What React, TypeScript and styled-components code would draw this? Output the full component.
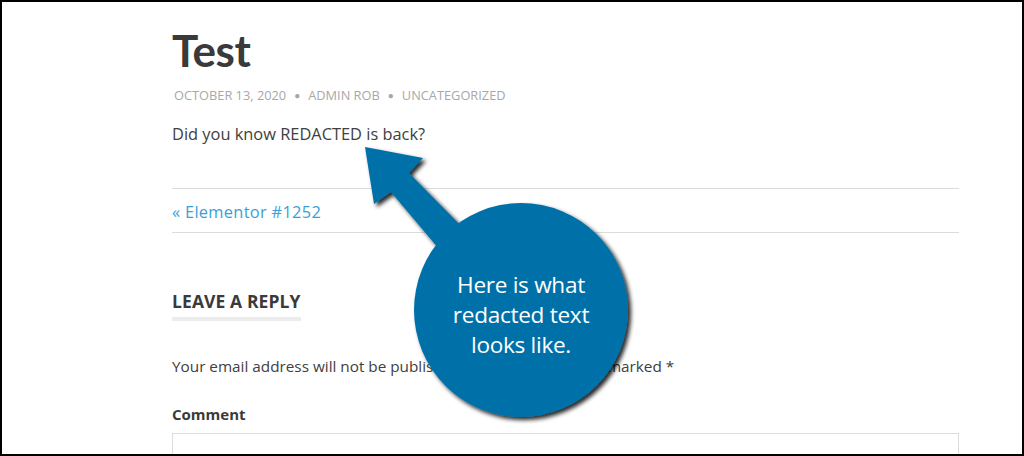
import React from "react";
import styled, { createGlobalStyle } from "styled-components";

const GlobalStyle = createGlobalStyle`
  html, body {
    margin: 0;
    padding: 0;
    background: #fff;
  }
  body {
    font-family: "Open Sans", "Liberation Sans", sans-serif;
    color: #404040;
  }
`;

const Frame = styled.div`
  position: relative;
  box-sizing: border-box;
  width: 1024px;
  height: 456px;
  border: 2px solid #000;
  overflow: hidden;
  background: #fff;
`;

const Article = styled.main`
  width: 787px;
  margin-left: 170px;
  display: flex;
  flex-direction: column;
`;

const Title = styled.h1`
  margin: 22px 0 0;
  font-family: "Lato", "Open Sans", sans-serif;
  font-size: 44px;
  font-weight: 700;
  line-height: 52px;
  color: #3a3a3a;
  letter-spacing: -0.5px;
`;

const Meta = styled.div`
  display: flex;
  align-items: center;
  gap: 8px;
  margin: 10px 0 0 2px;
  font-size: 12.8px;
  line-height: 18px;
  color: #a8a8a8;
  text-transform: uppercase;
`;

const Dot = styled.span`
  font-size: 10px;
`;

const Body = styled.p`
  margin: 18px 0 0;
  font-size: 16.4px;
  line-height: 24px;
`;

const Divider = styled.hr<{ $top: number }>`
  margin: ${({ $top }) => $top}px 0 0;
  border: 0;
  border-top: 1px solid #dcdcdc;
  height: 0;
`;

const NavLink = styled.a`
  margin: 11px 0 8px;
  font-size: 16.4px;
  line-height: 24px;
  color: #3a9fd8;
  text-decoration: none;
  letter-spacing: 0.3px;
`;

const ReplyTitle = styled.h3`
  align-self: flex-start;
  margin: 56px 0 0;
  padding-bottom: 4px;
  font-size: 17.5px;
  line-height: 24px;
  font-weight: 700;
  color: #3a3a3a;
  text-transform: uppercase;
  border-bottom: 4px solid #ececec;
  letter-spacing: 0.1px;
`;

const Notes = styled.p`
  margin: 33px 0 0;
  font-size: 15.3px;
  line-height: 24px;
`;

const Label = styled.label`
  margin: 24px 0 0;
  font-size: 15px;
  line-height: 24px;
  font-weight: 700;
  color: #3a3a3a;
`;

const TextBox = styled.textarea`
  margin-top: 7px;
  box-sizing: border-box;
  width: 100%;
  height: 120px;
  border: 1px solid #dcdcdc;
  resize: none;
`;

const Callout = styled.svg`
  position: absolute;
  left: 0;
  top: 0;
  pointer-events: none;
`;

const CalloutText = styled.div`
  position: absolute;
  left: 419px;
  top: 268px;
  width: 200px;
  text-align: center;
  font-family: "Open Sans", sans-serif;
  font-size: 22.6px;
  line-height: 30px;
  color: #fff;
  letter-spacing: -0.3px;
`;

export default function App() {
  return (
    <>
      <GlobalStyle />
      <Frame>
        <Article>
          <Title>Test</Title>
          <Meta>
            <span>October 13, 2020</span>
            <Dot>●</Dot>
            <span>Admin Rob</span>
            <Dot>●</Dot>
            <span>Uncategorized</span>
          </Meta>
          <Body>Did you know REDACTED is back?</Body>
          <Divider $top={42} />
          <NavLink href="#">« Elementor #1252</NavLink>
          <Divider $top={0} />
          <ReplyTitle>Leave a Reply</ReplyTitle>
          <Notes>
            Your email address will not be published. Required fields are marked *
          </Notes>
          <Label>Comment</Label>
          <TextBox />
        </Article>
        <Callout width="1020" height="452" viewBox="2 2 1020 452">
          <defs>
            <filter id="shade" x="-20%" y="-20%" width="140%" height="140%">
              <feDropShadow dx="3" dy="3" stdDeviation="2.2" floodColor="#000" floodOpacity="0.85" />
            </filter>
          </defs>
          <g fill="#0071a8" filter="url(#shade)">
            <path d="M365 147 L423 158 L409 173 L475 240 L450 262 L391 192 L374 204 Z" />
            <circle cx="521" cy="310" r="107" />
          </g>
        </Callout>
        <CalloutText>
          Here is what
          <br />
          redacted text
          <br />
          looks like.
        </CalloutText>
      </Frame>
    </>
  );
}
